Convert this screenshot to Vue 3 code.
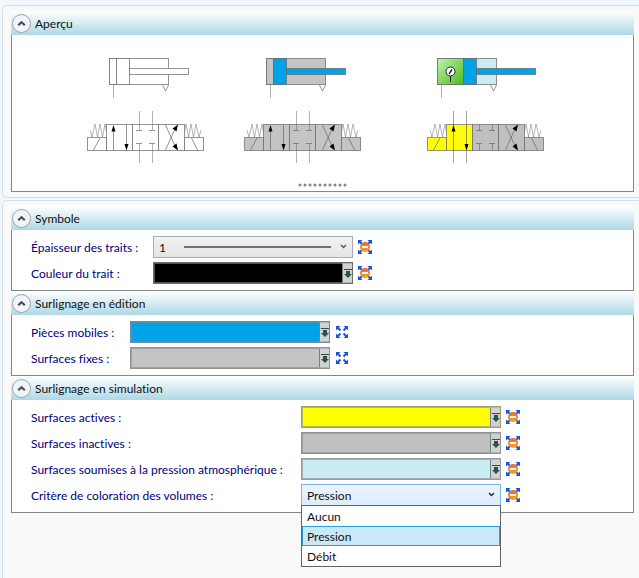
<script setup>
import { ref } from 'vue'

const thickness = ref('1')
const criterion = ref('Pression')
const criteria = ['Aucun', 'Pression', 'Débit']

const previews = [
  { id: 'outline', x: 0, cyl: 0, piston: 0, body: '#fff', front: '#fff', move: '#fff', idle: '#fff', active: '#fff', shift: false },
  { id: 'edit', x: 157, cyl: 0, piston: 0, body: '#c4c4c4', front: '#c4c4c4', move: '#00a2e8', idle: '#c4c4c4', active: '#c4c4c4', shift: false },
  { id: 'simulation', x: 340, cyl: -12, piston: 19, body: 'url(#pressure)', front: '#cbebf2', move: '#00a2e8', idle: '#c0c0c0', active: '#ffff00', shift: true }
]

const sections = [
  {
    id: 'symbole',
    title: 'Symbole',
    rows: [
      { id: 'epaisseur', label: 'Épaisseur des traits :', kind: 'line', override: true },
      { id: 'couleur', label: 'Couleur du trait :', kind: 'color', color: '#000000', override: true }
    ]
  },
  {
    id: 'edition',
    title: 'Surlignage en édition',
    rows: [
      { id: 'mobiles', label: 'Pièces mobiles :', kind: 'color', color: '#00a2e8', override: false },
      { id: 'fixes', label: 'Surfaces fixes :', kind: 'color', color: '#c4c4c4', override: false }
    ]
  },
  {
    id: 'simulation',
    title: 'Surlignage en simulation',
    rows: [
      { id: 'actives', label: 'Surfaces actives :', kind: 'color', color: '#ffff00', override: true },
      { id: 'inactives', label: 'Surfaces inactives :', kind: 'color', color: '#c0c0c0', override: true },
      { id: 'atmo', label: 'Surfaces soumises à la pression atmosphérique :', kind: 'color', color: '#cbebf2', override: true },
      { id: 'critere', label: 'Critère de coloration des volumes :', kind: 'choice', override: true }
    ]
  }
]
</script>

<template>
  <main class="page">
    <div class="pane">
      <section class="group">
        <h2 class="head">
          <button class="toggle" type="button" aria-label="Replier Aperçu">
            <svg width="9" height="7" viewBox="0 0 9 7"><path d="M1.2 5.3 4.5 2.2 7.8 5.3" fill="none" stroke="#4f4f4f" stroke-width="2.2" /></svg>
          </button>
          <span class="title">Aperçu</span>
        </h2>
        <div class="body preview">
          <svg class="drawing" width="480" height="120" viewBox="0 0 480 120" fill="none" stroke="#666" stroke-opacity=".7">
            <defs>
              <linearGradient id="pressure" x1="0" y1="0" x2="1" y2="1">
                <stop offset="0" stop-color="#c4f0b0" />
                <stop offset="1" stop-color="#48bd18" />
              </linearGradient>
            </defs>
            <g v-for="p in previews" :key="p.id" :transform="`translate(${p.x} 0)`">
              <!-- cylinder -->
              <g :transform="`translate(${p.cyl} 0)`">
                <path d="M33.5 35V48" stroke-opacity=".5" />
                <path d="M82.5 35 85.5 41 88.5 35" stroke-opacity=".7" />
                <rect x="29.5" y="8.5" width="59" height="26" :fill="p.front" />
                <rect x="29.5" y="8.5" :width="p.piston + 7" height="26" :fill="p.body" />
                <g :transform="`translate(${p.piston} 0)`">
                  <rect x="36.5" y="8.5" width="13" height="26" :fill="p.move" />
                  <rect x="49.5" y="18.5" width="59" height="6" :fill="p.move" />
                </g>
                <g v-if="p.shift" stroke="#222" stroke-opacity="1">
                  <path d="M42.5 26V32" />
                  <circle cx="42.5" cy="21.5" r="4.5" fill="#fff" />
                  <path d="M41 24 44 19.5" stroke-width="1.4" />
                </g>
              </g>
              <!-- springs -->
              <path d="M10 80 12 87 15 74 17.5 87 20 74 22.5 87 25 74 26.5 82" stroke-opacity=".6" stroke-width=".8" />
              <path d="M121 80 119 87 116 74 113.5 87 111 74 108.5 87 106 74 104.5 82" stroke-opacity=".6" stroke-width=".8" />
              <!-- solenoids -->
              <rect x="7.5" y="87.5" width="19" height="13" :fill="p.active" />
              <rect x="104.5" y="87.5" width="19" height="13" :fill="p.idle" />
              <path d="M13.5 100 20 88M111.5 88 117.5 100" />
              <!-- valve positions -->
              <rect x="26.5" y="74.5" width="26" height="26" :fill="p.active" />
              <rect x="52.5" y="74.5" width="26" height="26" :fill="p.idle" />
              <rect x="78.5" y="74.5" width="26" height="26" :fill="p.idle" />
              <path d="M33.5 80V100M46.5 75V95" />
              <path d="M85.5 100 95 79M85.5 75 95 96" />
              <path d="M56 80.5H62M69 80.5H75M56 93.5H62M69 93.5H75" />
              <path v-if="p.shift" d="M59.5 75V80M72.5 75V80M59.5 94V100M72.5 94V100M33.5 61V80M46.5 61V75M33.5 100V113M46.5 100V113" stroke-opacity=".6" />
              <path v-else d="M59.5 61V80M72.5 61V80M59.5 94V113M72.5 94V113" stroke-opacity=".5" />
              <path d="M33.5 75 35.5 81.5H31.5ZM46.5 100.5 48.5 94H44.5ZM98 74.5 92.5 78.5 96.5 81.5ZM98 100.5 92.5 96.5 96.5 93.5Z" fill="#000" stroke="none" />
            </g>
          </svg>
          <svg class="grip" width="50" height="4" viewBox="0 0 50 4" fill="#858585">
            <circle v-for="n in 10" :key="n" :cx="n * 5 - 3" cy="2" r="1.5" />
          </svg>
        </div>
      </section>
    </div>

    <div class="pane settings">
      <section v-for="s in sections" :key="s.id" class="group">
        <h2 class="head">
          <button class="toggle" type="button" :aria-label="'Replier ' + s.title">
            <svg width="9" height="7" viewBox="0 0 9 7"><path d="M1.2 5.3 4.5 2.2 7.8 5.3" fill="none" stroke="#4f4f4f" stroke-width="2.2" /></svg>
          </button>
          <span class="title">{{ s.title }}</span>
        </h2>
        <div class="body form" :class="s.id">
          <div v-for="r in s.rows" :key="r.id" class="row">
            <label :for="r.id">{{ r.label }}</label>

            <div v-if="r.kind === 'line'" class="combo">
              <select :id="r.id" v-model="thickness" class="select">
                <option>1</option>
                <option>2</option>
                <option>3</option>
              </select>
              <span class="stroke"></span>
              <svg class="caret" width="7" height="5" viewBox="0 0 7 5"><path d="M1 1 3.5 3.5 6 1" fill="none" stroke="#555" stroke-width="1.3" /></svg>
            </div>

            <button v-else-if="r.kind === 'color'" :id="r.id" type="button" class="picker" :style="{ backgroundColor: r.color }">
              <span class="drop">
                <svg width="8" height="10" viewBox="0 0 8 10" fill="#2f4f4f"><path d="M0 1H8V2H0ZM2 3H6V6H8L4 10 0 6H2Z" /></svg>
              </span>
            </button>

            <div v-else class="combo">
              <select :id="r.id" v-model="criterion" class="select open">
                <option v-for="c in criteria" :key="c">{{ c }}</option>
              </select>
              <svg class="caret" width="7" height="5" viewBox="0 0 7 5"><path d="M1 1 3.5 3.5 6 1" fill="none" stroke="#222" stroke-width="1.3" /></svg>
              <ul class="list" role="listbox" aria-label="Critère">
                <li v-for="c in criteria" :key="c" role="option" :aria-selected="c === criterion" :class="{ on: c === criterion }" @click="criterion = c">{{ c }}</li>
              </ul>
            </div>

            <button type="button" class="reset" aria-label="Valeur par défaut">
              <svg v-if="r.override" width="14" height="14" viewBox="0 0 14 14">
                <defs>
                  <linearGradient :id="'o-' + r.id" x1="0" y1="0" x2="0" y2="1">
                    <stop offset="0" stop-color="#e8663a" />
                    <stop offset="1" stop-color="#f9a21b" />
                  </linearGradient>
                </defs>
                <path d="M0 0H4.5L0 4.5ZM14 0V4.5L9.5 0ZM0 14V9.5L4.5 14ZM14 14H9.5L14 9.5Z" fill="#1b55dd" />
                <path d="M1 1 4 4M13 1 10 4M1 13 4 10M13 13 10 10" stroke="#1b55dd" stroke-width="2" />
                <circle cx="7" cy="7" r="5" :fill="`url(#o-${r.id})`" />
                <rect x="4" y="6" width="6" height="2" fill="#fff" />
              </svg>
              <svg v-else width="14" height="14" viewBox="0 0 14 14">
                <path d="M1 1H5.5L1 5.5ZM13 1V5.5L8.5 1ZM1 13V8.5L5.5 13ZM13 13H8.5L13 8.5Z" fill="#1b55dd" />
                <path d="M2 2 5.5 5.5M12 2 8.5 5.5M2 12 5.5 8.5M12 12 8.5 8.5" stroke="#1b55dd" stroke-width="2" />
              </svg>
            </button>
          </div>
        </div>
      </section>
    </div>
  </main>
</template>

<style>
body {
  margin: 0;
  background: #f0f7fd;
}
</style>

<style scoped>
.page {
  box-sizing: border-box;
  display: flex;
  flex-direction: column;
  gap: 2px;
  min-height: 100vh;
  padding: 5px 0 0 2px;
  font-family: Lato, "Open Sans", sans-serif;
  font-size: 12px;
  font-variant-ligatures: none;
  line-height: 16px;
  color: #111;
}
.pane {
  padding: 5px 5px 5px 8px;
  background: #f9f9f9;
  border: 1px solid #d3dfe7;
  border-right: 0;
  border-radius: 5px 0 0 5px;
}
.settings {
  flex: 1;
  border-bottom: 0;
  border-radius: 5px 0 0 0;
}
.head {
  display: flex;
  align-items: center;
  gap: 4px;
  height: 24px;
  margin: 0;
  padding-left: 1px;
  font-size: 12px;
  font-weight: 400;
  background: linear-gradient(#fff, #add8e6);
}
.title,
label {
  padding-top: 2px;
}
.toggle {
  display: flex;
  align-items: center;
  justify-content: center;
  width: 19px;
  height: 19px;
  padding: 0;
  background: #f0f5fc;
  border: 1px solid #a3a3a3;
  border-radius: 50%;
}
.body {
  background: #fff;
  border: 1px solid #868686;
  border-top: 0;
}
.preview {
  display: flex;
  flex-direction: column;
  padding: 15px 0 4px;
}
.drawing {
  margin-left: 68px;
}
.grip {
  align-self: center;
  margin-top: 13px;
}
.form {
  display: flex;
  flex-direction: column;
  gap: 4px;
  padding: 6px 0 6px 19px;
}
.row {
  display: grid;
  grid-template-columns: var(--label) 200px 14px;
  column-gap: 5px;
  align-items: center;
  height: 22px;
}
.symbole { --label: 117px; }
.edition { --label: 94px; }
.simulation { --label: 265px; }
label {
  color: #000080;
  white-space: nowrap;
}
.combo {
  position: relative;
  height: 22px;
}
.select {
  appearance: none;
  box-sizing: border-box;
  width: 100%;
  height: 22px;
  padding: 2px 5px 0;
  font: inherit;
  color: #111;
  background: linear-gradient(#f2f2f2, #e4e4e4);
  border: 1px solid #acacac;
  border-radius: 0;
}
.select.open {
  background: linear-gradient(#ebf4fc, #dcecfc);
  border-color: #7eb4ea;
}
.caret {
  position: absolute;
  top: 8px;
  right: 6px;
  pointer-events: none;
}
.stroke {
  position: absolute;
  top: 10px;
  left: 31px;
  right: 22px;
  height: 2px;
  background: #707070;
  pointer-events: none;
}
.picker {
  display: flex;
  justify-content: flex-end;
  box-sizing: border-box;
  width: 100%;
  height: 22px;
  padding: 0;
  border: 1px solid rgba(136, 136, 136, .8);
  border-radius: 0;
  box-shadow: inset 0 0 0 1px rgba(136, 136, 136, .6);
}
.drop {
  display: flex;
  align-items: center;
  justify-content: center;
  box-sizing: border-box;
  width: 10px;
  height: 20px;
  background: #d2d2d2;
  border: 1px solid #b4b4b4;
  border-width: 1px 0 1px 1px;
  border-left-color: #6f8585;
}
.drop svg,
.reset svg {
  flex: none;
}
.reset {
  display: flex;
  width: 14px;
  height: 14px;
  padding: 0;
  background: none;
  border: 0;
}
.list {
  position: absolute;
  top: 21px;
  left: 0;
  right: 0;
  z-index: 1;
  margin: 0;
  padding: 0;
  list-style: none;
  background: #fff;
  border: 1px solid #646464;
}
.list li {
  box-sizing: border-box;
  height: 20px;
  padding: 2px 4px 0;
  border: 1px solid transparent;
}
.list .on {
  background: #cbe8f6;
  border-color: #26a0da;
}
</style>
